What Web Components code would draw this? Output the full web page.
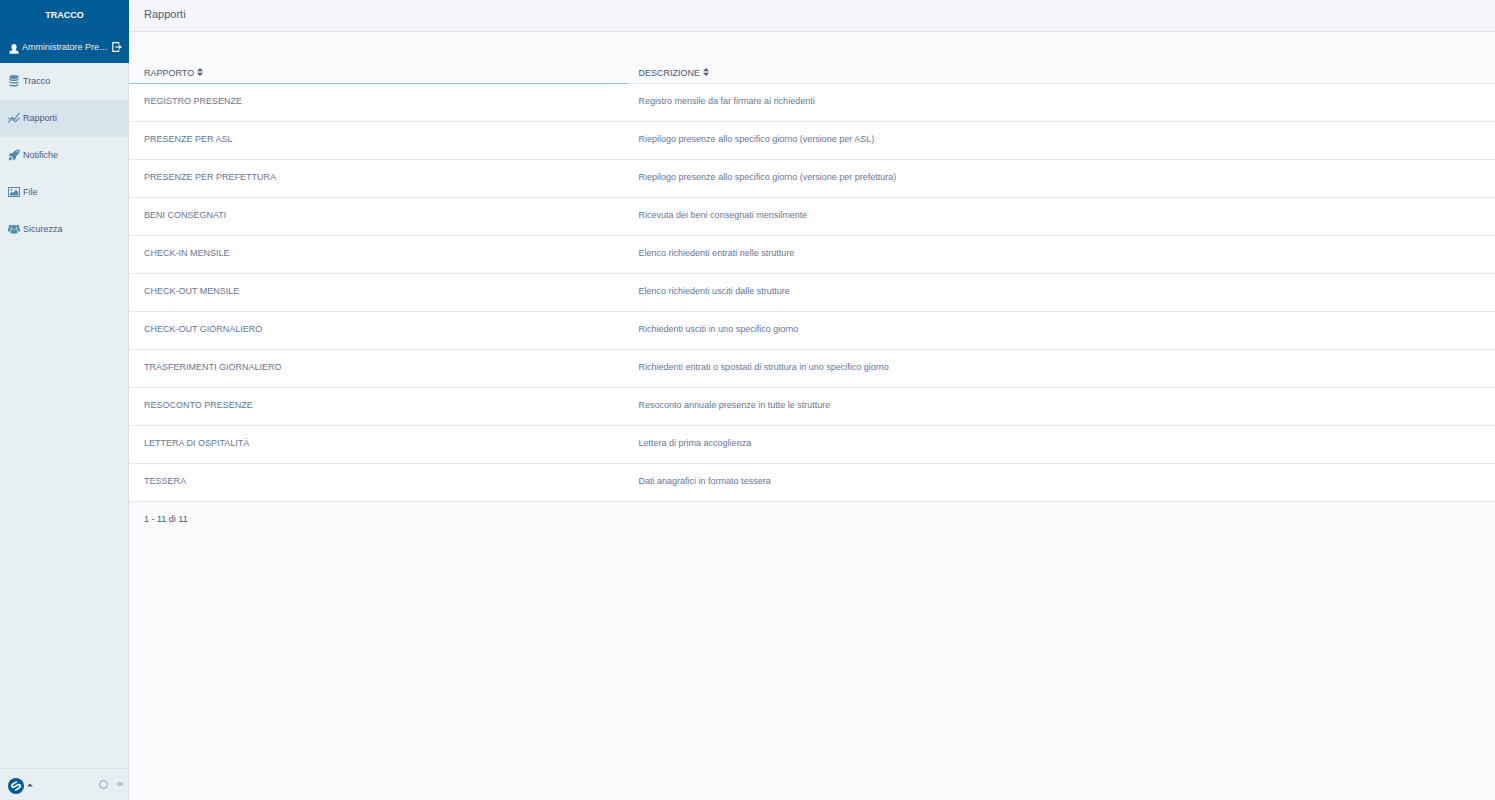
<!DOCTYPE html>
<html lang="it">
<head>
<meta charset="utf-8">
<title>Tracco - Rapporti</title>
<style>
  html, body { margin: 0; }
  body { font-family: "Liberation Sans", Arial, sans-serif; font-size: 9px; line-height: 12px; color: #49587a; background: #fafbfd; }
</style>
</head>
<body>
<app-shell>
  <app-sidebar slot="side">
    <user-bar slot="user">Amministratore Prefettura</user-bar>
    <nav-item icon="database">Tracco</nav-item>
    <nav-item icon="chart" active>Rapporti</nav-item>
    <nav-item icon="rocket">Notifiche</nav-item>
    <nav-item icon="image">File</nav-item>
    <nav-item icon="users">Sicurezza</nav-item>
    <side-footer slot="footer"></side-footer>
  </app-sidebar>
  <page-header>Rapporti</page-header>
  <report-table></report-table>
</app-shell>

<script>
const ICONS = {
  database: `<svg viewBox="0 0 12 12"><ellipse cx="6" cy="2" rx="4.6" ry="1.9"/><path d="M1.4 3.4C2.8 4.9 9.2 4.9 10.6 3.4V4.8C10 6.5 2 6.5 1.4 4.8ZM1.4 6.2C2.8 7.6 9.2 7.6 10.6 6.2V7.5C10 9.1 2 9.1 1.4 7.5ZM1.4 9C2.8 10.3 9.2 10.3 10.6 9V10.1C10 12.1 2 12.1 1.4 10.1Z"/></svg>`,
  chart: `<svg viewBox="0 0 12 12"><g fill="none" stroke="currentColor" stroke-width="1.2"><path d="M.5 10.8 4 5.3 6.7 7.2 11.3 1.2"/><path d="M3.6 8.2 4.5 7.4 7.3 9.8 11.8 5.6"/><path d="M.4 6 1.6 6.9"/></g></svg>`,
  rocket: `<svg viewBox="0 0 12 12"><path fill-rule="evenodd" d="M11.6.4C8.5.3 6.4 1.5 4.6 4L2.3 4.2.6 7 3 6.9 5.1 9 5 11.4 7.8 9.7 8 7.4C10.5 5.6 11.7 3.5 11.6.4ZM9.2 2.1A.7.7 0 1 1 9.2 3.5.7.7 0 1 1 9.2 2.1Z"/><path d="M2.6 7.8C1.1 8.1.8 9.8.6 11.4 2.2 11.2 3.9 10.9 4.2 9.4Z"/></svg>`,
  image: `<svg viewBox="0 0 12 12"><rect x=".5" y="1.5" width="11" height="9" fill="none" stroke="currentColor"/><circle cx="3.3" cy="4" r="1"/><path d="M2 9.6V7.6L3.8 5.8 5 7 8 3.8 10.3 6.1V9.6Z"/></svg>`,
  users: `<svg viewBox="0 0 12 12"><circle cx="2.3" cy="3.3" r="1.6"/><circle cx="9.7" cy="3.3" r="1.6"/><circle cx="6" cy="4" r="2.2"/><path d="M0 8.4V6.3C0 5.4.5 4.8 1.4 4.8H3.4C3.6 5.8 3.4 6 2.7 6.6 2.2 7.1 2.1 7.5 2 8.4ZM12 8.4V6.3C12 5.4 11.5 4.8 10.6 4.8H8.6C8.4 5.8 8.6 6 9.3 6.6 9.8 7.1 9.9 7.5 10 8.4Z"/><path d="M2.5 9.2C2.5 7.3 3.3 6.2 4.4 6.2 5.4 6.8 6.6 6.8 7.6 6.2 8.7 6.2 9.5 7.3 9.5 9.2 9.5 10.2 8.8 10.6 8 10.6H4C3.2 10.6 2.5 10.2 2.5 9.2Z"/></svg>`
};

function define(name, html, setup) {
  const template = document.createElement("template");
  template.innerHTML = html;
  customElements.define(name, class extends HTMLElement {
    constructor() {
      super();
      this.attachShadow({ mode: "open" }).append(template.content.cloneNode(true));
    }
    connectedCallback() { if (setup) setup(this, this.shadowRoot); }
  });
}

define("app-shell", `
  <style>
    :host { display: grid; grid-template-columns: 129px minmax(0, 1fr); min-height: 100vh; }
    ::slotted([slot=side]) { min-height: 100vh; }
  </style>
  <slot name="side"></slot><main><slot></slot></main>`);

define("app-sidebar", `
  <style>
    :host { display: flex; flex-direction: column; box-sizing: border-box; background: #e8eff3; box-shadow: inset -1px 0 #d6dfe9; }
    header { background: #015b95; color: #fff; }
    h1 { margin: 0; height: 31px; line-height: 30px; font-size: 9px; text-align: center; border-bottom: 1px solid #0a4f86; box-sizing: border-box; }
    nav { flex: 1; }
  </style>
  <header><h1>TRACCO</h1><slot name="user"></slot></header>
  <nav><slot></slot></nav>
  <slot name="footer"></slot>`);

define("user-bar", `
  <style>
    :host { display: flex; align-items: center; height: 32px; padding: 0 7px 0 9px; gap: 3px; color: #e9f2f8; }
    span { flex: 1; min-width: 0; overflow: hidden; text-overflow: ellipsis; white-space: nowrap; }
    button { border: 0; padding: 0; background: none; color: inherit; display: flex; }
    svg { display: block; width: 10px; height: 10px; fill: #fff; }
    button svg { fill: none; stroke: #fff; stroke-width: 1.2; }
    .person { padding-top: 3px; }
  </style>
  <svg class="person" viewBox="0 0 10 10"><ellipse cx="5" cy="3" rx="2.6" ry="2.9"/><path d="M.4 9.7V8.2C.6 6.9 2.4 6.7 3.7 6.1V5H6.3V6.1C7.6 6.7 9.4 6.9 9.6 8.2V9.7Z"/></svg>
  <span><slot></slot></span>
  <button aria-label="Esci"><svg viewBox="0 0 10 10"><path d="M6.6 2.5V.7H.8V9.3H6.6V7.5"/><path d="M3.4 5H7.5"/><path d="M7 2.8 9.9 5 7 7.2Z" fill="#fff" stroke="none"/></svg></button>`);

define("nav-item", `
  <style>
    :host { display: block; }
    a { display: flex; align-items: center; gap: 3px; height: 37px; padding: 0 8px 1px; color: #49587a; text-decoration: none; box-sizing: border-box; }
    :host([active]) a { background: #d7e4ec; }
    .icon { color: #508bad; }
    svg { display: block; width: 12px; height: 12px; fill: currentColor; }
  </style>
  <a href="#"><span class="icon"></span><slot></slot></a>`,
  (host, root) => {
    root.querySelector(".icon").innerHTML = ICONS[host.getAttribute("icon")];
    if (host.hasAttribute("active")) root.querySelector("a").setAttribute("aria-current", "page");
  });

define("side-footer", `
  <style>
    :host { display: flex; align-items: center; height: 31px; padding: 0 6px 0 8px; border-top: 1px solid #d6e1ea; }
    button { border: 0; padding: 0; background: none; display: flex; align-items: center; gap: 3px; }
    .menu { margin-right: auto; padding-top: 2px; }
    .status { margin-right: 9px; }
    svg { display: block; }
  </style>
  <button class="menu" aria-label="Menu">
    <svg width="16" height="16" viewBox="0 0 16 16"><circle cx="8" cy="8" r="8" fill="#015b95"/><path d="M8.8 3.6 4.6 6.2C2.8 7.4 4.2 9.8 6 8.9L10.2 6.8C12 6 13.2 8.4 11.5 9.6L7.2 12.4" fill="none" stroke="#fff" stroke-width="1.7"/></svg>
    <svg width="6" height="6" viewBox="0 0 6 6"><path d="M0 3.5 3 .5 6 3.5Z" fill="#49587a"/></svg>
  </button>
  <button class="status" aria-label="Stato"><svg width="9" height="9" viewBox="0 0 9 9"><circle cx="4.5" cy="4.5" r="3.9" fill="none" stroke="#8b9bb5"/></svg></button>
  <button aria-label="Comprimi"><svg width="6" height="8" viewBox="0 0 6 8"><path d="M2.7 1 .7 3 2.7 5M5.5 1 3.5 3 5.5 5" fill="none" stroke="#71809d" stroke-width="1"/></svg></button>`);

define("page-header", `
  <style>
    :host { display: block; background: #f4f6f9; border-bottom: 1px solid #dbe2ee; padding: 0 15px; }
    h2 { margin: 0; font-size: 11px; font-weight: normal; line-height: 29px; padding-bottom: 2px; }
  </style>
  <h2><slot></slot></h2>`);

define("report-table", `
  <style>
    :host { display: block; padding-top: 30px; }
    table { width: 100%; border-collapse: separate; border-spacing: 0; table-layout: fixed; }
    th, td { box-sizing: border-box; padding: 0 11px; text-align: left; font-weight: normal; border-bottom: 1px solid #e3e9f3; }
    th:first-child, td:first-child { width: 36.5%; padding-left: 15px; }
    th { height: 22px; font-size: 9px; }
    th:first-child { border-color: #87c5e6; }
    th button { display: flex; align-items: center; gap: 3px; border: 0; padding: 0; background: none; font: inherit; line-height: 12px; color: inherit; }
    th svg { display: block; width: 6px; height: 8px; fill: #49587a; margin-bottom: 2px; }
    td { height: 38px; background: #fff; color: #647698; padding-bottom: 3px; }
    td a { color: inherit; text-decoration: none; }
    p { margin: 0; padding: 11px 15px; }
  </style>
  <table>
    <thead><tr></tr></thead>
    <tbody></tbody>
  </table>
  <p>1 - 11 di 11</p>`,
  (host, root) => {
    const arrows = `<svg viewBox="0 0 6 8"><path d="M0 3.3 3 0 6 3.3ZM0 4.7H6L3 8Z"/></svg>`;
    root.querySelector("thead tr").innerHTML = ["RAPPORTO", "DESCRIZIONE"]
      .map(t => `<th scope="col"><button>${t}${arrows}</button></th>`).join("");
    root.querySelector("tbody").innerHTML = [
      ["REGISTRO PRESENZE", "Registro mensile da far firmare ai richiedenti"],
      ["PRESENZE PER ASL", "Riepilogo presenze allo specifico giorno (versione per ASL)"],
      ["PRESENZE PER PREFETTURA", "Riepilogo presenze allo specifico giorno (versione per prefettura)"],
      ["BENI CONSEGNATI", "Ricevuta dei beni consegnati mensilmente"],
      ["CHECK-IN MENSILE", "Elenco richiedenti entrati nelle strutture"],
      ["CHECK-OUT MENSILE", "Elenco richiedenti usciti dalle strutture"],
      ["CHECK-OUT GIORNALIERO", "Richiedenti usciti in uno specifico giorno"],
      ["TRASFERIMENTI GIORNALIERO", "Richiedenti entrati o spostati di struttura in uno specifico giorno"],
      ["RESOCONTO PRESENZE", "Resoconto annuale presenze in tutte le strutture"],
      ["LETTERA DI OSPITALITÀ", "Lettera di prima accoglienza"],
      ["TESSERA", "Dati anagrafici in formato tessera"]
    ].map(([name, text]) => `<tr><td><a href="#">${name}</a></td><td>${text}</td></tr>`).join("");
  });
</script>
</body>
</html>
